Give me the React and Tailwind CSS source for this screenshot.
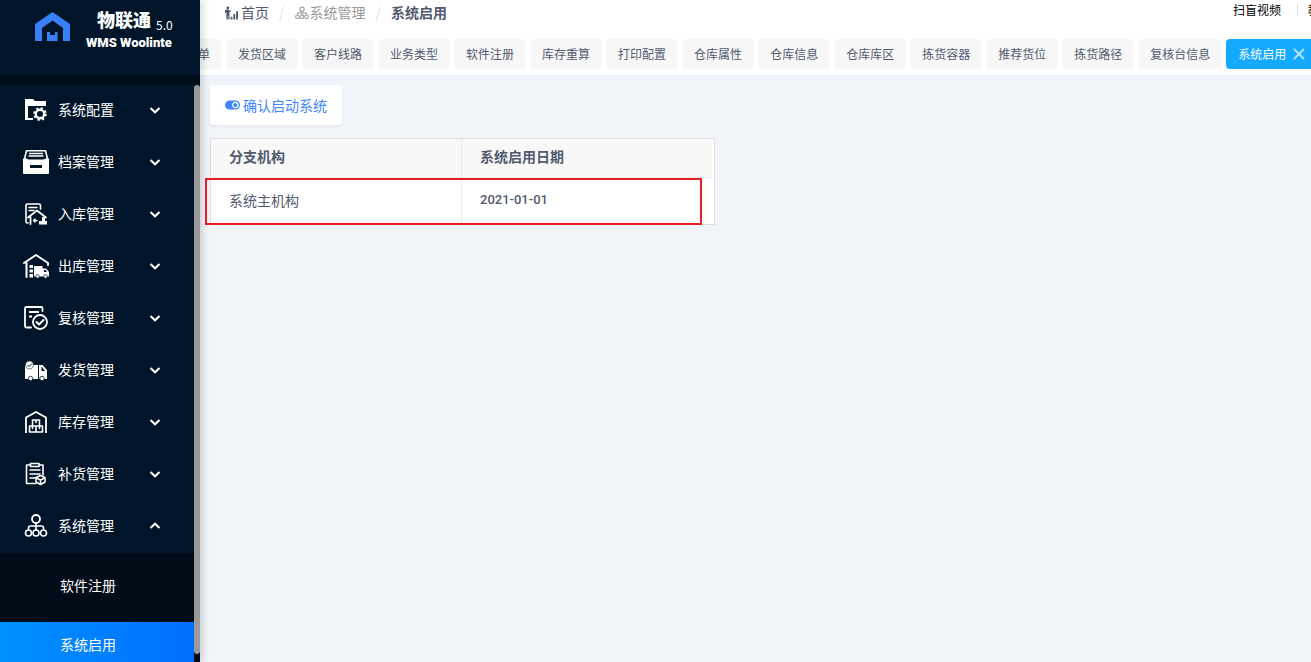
import React from 'react';

const strokeProps = {
  fill: 'none',
  stroke: 'currentColor',
  strokeWidth: 2,
  strokeLinecap: 'round',
  strokeLinejoin: 'round',
};

const Icon = ({ children }) => (
  <svg viewBox="0 0 26 26" className="h-[26px] w-[26px] shrink-0" aria-hidden="true">
    {children}
  </svg>
);

const ConfigIcon = () => (
  <Icon>
    <path fill="currentColor" d="M2 2h8l2 2h11v5H5v12h5v2H2z" />
    <circle cx="17" cy="17" r="4.2" fill="none" stroke="currentColor" strokeWidth="2.4" />
    <circle cx="17" cy="17" r="5.8" fill="none" stroke="currentColor" strokeWidth="2" strokeDasharray="2.3 2.25" />
  </Icon>
);

const ArchiveIcon = () => (
  <Icon>
    <path {...strokeProps} strokeWidth="1.6" d="M1 12L3.5 1.8h19L25 12" />
    <path stroke="currentColor" strokeWidth="1.4" d="M6 4.5h14M5.5 7h15" />
    <path fill="currentColor" fillRule="evenodd" d="M0 9.5h4l1 1h16l1-1h4V24a1 1 0 0 1-1 1H1a1 1 0 0 1-1-1zM7 16v3h12v-3z" />
  </Icon>
);

const InboundIcon = () => (
  <Icon>
    <path {...strokeProps} strokeWidth="1.6" d="M5 22H4.5A1.5 1.5 0 0 1 3 20.5v-16A1.5 1.5 0 0 1 4.5 3H16a1.5 1.5 0 0 1 1.5 1.5V8" />
    <path {...strokeProps} strokeWidth="1.4" d="M6 6.5h8M6 9.5h5" />
    <path {...strokeProps} strokeWidth="1.8" d="M5 16.5l9-7 9 7M7.500 16v7" />
    <path {...strokeProps} strokeWidth="1.4" d="M14 19.5h-3.500M12 18l-1.500 1.500L12 21" />
    <path fill="currentColor" d="M19 16h3v4h2v3.500h-8V20h3z" />
  </Icon>
);

const OutboundIcon = () => (
  <Icon>
    <path {...strokeProps} d="M1 10L13 2l12 8v2M3.5 10v14" />
    <path fill="currentColor" d="M6.5 12H10v3H6.500zM6.500 16.500H10v3H6.500zM6.500 21H10v3.500H6.500z" />
    <path fill="currentColor" fillRule="evenodd" d="M11 13h8.500v2.500H23l3 3.500v4.500H11zM21 17v2h3l-1.500-2z" />
    <circle cx="14.5" cy="23.5" r="1.8" fill="currentColor" stroke="#001529" strokeWidth="0.7" />
    <circle cx="22.5" cy="23.5" r="1.8" fill="currentColor" stroke="#001529" strokeWidth="0.7" />
  </Icon>
);

const ReviewIcon = () => (
  <Icon>
    <path {...strokeProps} strokeWidth="1.8" d="M8 22.500H3.500A1.500 1.500 0 0 1 2 21V3.500A1.500 1.500 0 0 1 3.500 2H18a1.500 1.500 0 0 1 1.500 1.500V6" />
    <path {...strokeProps} strokeWidth="1.8" strokeLinecap="butt" d="M6 7h10M6 11.500h3" />
    <circle cx="17" cy="17" r="7" {...strokeProps} strokeWidth="1.8" />
    <path {...strokeProps} d="M13.500 17l2.500 2.500 4.500-4.500" />
  </Icon>
);

const DeliveryIcon = () => (
  <Icon>
    <path fill="currentColor" fillRule="evenodd" d="M2 8h13v14H3a1 1 0 0 1-1-1zM16 8h3.500L24 13v9h-8zM18.500 10v4h3.500l-3-4z" />
    <circle cx="6.5" cy="8" r="4" fill="currentColor" stroke="#001529" strokeWidth="0.5" />
    <path fill="none" stroke="#001529" strokeWidth="1" d="M4.500 8L6 9.500 9 6.500" />
    <circle cx="7.5" cy="21.5" r="2.2" fill="currentColor" stroke="#001529" strokeWidth="0.8" />
    <circle cx="19" cy="21.5" r="2.2" fill="currentColor" stroke="#001529" strokeWidth="0.8" />
  </Icon>
);

const StockIcon = () => (
  <Icon>
    <path {...strokeProps} strokeLinecap="butt" strokeWidth="1.8" d="M3 24V8.500L13 3l10 5.500V24" />
    <path {...strokeProps} strokeWidth="1.6" d="M9.500 11h7v6h-7zM6.500 17h6.500v6H6.500zM13 17h6.500v6H13zM13 11v2.500M9.500 17v2.500M16.500 17v2.500" />
  </Icon>
);

const ReplenishIcon = () => (
  <Icon>
    <path {...strokeProps} strokeWidth="1.6" d="M7 4H3.500v18.500H13M16.500 4H20v10M7.500 2.500h8.500v3H7.500z" />
    <path {...strokeProps} strokeWidth="1.5" d="M7 9h10M7 13h10M7 17h5" />
    <path {...strokeProps} strokeWidth="1.5" d="M17.500 14.500l4.500 2v4.500l-4.500 2.500L13 21v-4.500zM13.500 17l4 2 4-2M17.500 19v4" />
  </Icon>
);

const OrgIcon = () => (
  <Icon>
    <circle cx="13" cy="6" r="4" {...strokeProps} strokeWidth="1.8" />
    <path {...strokeProps} strokeWidth="1.6" d="M13 10v7M5.500 16v-1a2 2 0 0 1 2-2h11a2 2 0 0 1 2 2v1" />
    <circle cx="5.5" cy="20" r="3" {...strokeProps} strokeWidth="1.6" />
    <circle cx="13" cy="20" r="3" {...strokeProps} strokeWidth="1.6" />
    <circle cx="20.5" cy="20" r="3" {...strokeProps} strokeWidth="1.6" />
  </Icon>
);

const Chevron = ({ open }) => (
  <svg viewBox="0 0 12 12" className={`h-3 w-3 ${open ? 'rotate-180' : ''}`} aria-hidden="true">
    <path fill="none" stroke="currentColor" strokeWidth="2" d="M1.500 4L6 8.300 10.500 4" />
  </svg>
);

const menus = [
  { label: '系统配置', icon: ConfigIcon },
  { label: '档案管理', icon: ArchiveIcon },
  { label: '入库管理', icon: InboundIcon },
  { label: '出库管理', icon: OutboundIcon },
  { label: '复核管理', icon: ReviewIcon },
  { label: '发货管理', icon: DeliveryIcon },
  { label: '库存管理', icon: StockIcon },
  { label: '补货管理', icon: ReplenishIcon },
  { label: '系统管理', icon: OrgIcon, open: true },
];

const tabs = [
  '发货区域', '客户线路', '业务类型', '软件注册', '库存重算', '打印配置', '仓库属性',
  '仓库信息', '仓库库区', '拣货容器', '推荐货位', '拣货路径', '复核台信息',
];

const Sidebar = () => (
  <aside className="relative z-10 flex w-[200px] shrink-0 flex-col bg-[#000c17] text-white shadow-[2px_0_8px_rgba(29,35,41,0.2)]">
    <div className="flex h-[75px] shrink-0 gap-4 bg-[#001529] pt-2 pl-[35px]">
      <svg viewBox="0 0 35 30" className="mt-1 h-[30px] w-[35px]" aria-hidden="true">
        <path fill="#3a7ffa" d="M0 29V12L17.500 0 35 12v17h-7V16l-10.500-7.500L7 16v13z" />
        <path fill="#3a7ffa" d="M12 20h3v3h5v-3h2.500v9H12z" />
      </svg>
      <div>
        <div className="flex h-[22px] items-center gap-[5px] pl-[11px] whitespace-nowrap">
          <span className="text-lg leading-6 font-black">物联通</span>
          <span className="pt-3 text-xs leading-4">5.0</span>
        </div>
        <div className="pt-px font-[Roboto] text-[13px] leading-6 font-black whitespace-nowrap">WMS Woolinte</div>
      </div>
    </div>

    <div className="flex min-h-0 flex-1 pt-[10px]">
      <nav className="min-w-0 flex-1 overflow-hidden">
        {menus.map(({ label, icon: MenuIcon, open }) => (
          <button
            key={label}
            type="button"
            aria-expanded={!!open}
            className="flex h-[52px] w-full items-center bg-[#001529] pr-[33px] pb-[2px] pl-[23px] text-sm"
          >
            <MenuIcon />
            <span className="ml-[9px] flex-1 pb-[2px] text-left">{label}</span>
            <Chevron open={open} />
          </button>
        ))}
        <div className="flex flex-col gap-[13px] pt-[10px]">
          <a href="#register" className="flex h-[46px] items-center pb-[2px] pl-[60px] text-sm">软件注册</a>
          <a href="#enable" className="flex h-[46px] items-center bg-linear-to-r from-[#0091ff] to-[#006eff] pb-[2px] pl-[60px] text-sm">
            系统启用
          </a>
        </div>
      </nav>
      <div className="mb-2 w-[6px] rounded-full bg-[#999]" />
    </div>
  </aside>
);

const Header = () => (
  <header className="shrink-0 bg-white">
    <div className="flex h-[39px] justify-between overflow-hidden">
      <nav className="flex h-6 items-center pl-[25px] text-sm text-[#515a6e]" aria-label="breadcrumb">
        <a href="#home" className="flex items-center gap-[3px]">
          <svg viewBox="0 0 14 14" className="mt-[2px] h-[14px] w-[13px]" fill="currentColor" aria-hidden="true">
            <circle cx="3" cy="1.5" r="1.5" />
            <path d="M0 4l2-.8h2L6.500 5v1L4.800 5.500V14H3.500v-4H3v4H1.500V6L1 7H0zM6 11h2v3H6zM9 8h2v6H9zM12 5h2v9h-2z" />
          </svg>
          首页
        </a>
        <span className="mx-[10px] text-[#dcdee2]">/</span>
        <a href="#system" className="flex items-center gap-px text-[#999]">
          <svg viewBox="0 0 26 26" className="mt-[2px] h-[14px] w-[14px]" fill="none" stroke="currentColor" strokeWidth="2" aria-hidden="true">
            <circle cx="13" cy="6" r="4" />
            <path d="M13 10v7M5 16v-3h16v3" />
            <circle cx="4.5" cy="20" r="3.3" />
            <circle cx="13" cy="20" r="3.3" />
            <circle cx="21.5" cy="20" r="3.3" />
          </svg>
          系统管理
        </a>
        <span className="mx-[10px] text-[#dcdee2]">/</span>
        <span className="font-bold">系统启用</span>
      </nav>
      <div className="-mr-[9px] flex h-5 items-center text-xs text-black">
        <a href="#video">扫盲视频</a>
        <span className="mr-[10px] ml-4 h-3 w-px bg-[#dcdee2]" />
        <a href="#course">教</a>
      </div>
    </div>
    <div className="overflow-hidden pb-[6px]">
      <div className="-ml-[2px] flex gap-1 text-xs whitespace-nowrap text-[#515a6e]">
        <button type="button" className="h-[30px] shrink-0 rounded bg-[#f7f7f7] pr-3">单</button>
        {tabs.map((tab) => (
          <button key={tab} type="button" className="h-[30px] shrink-0 rounded bg-[#f7f7f7] px-3">{tab}</button>
        ))}
        <button type="button" className="flex h-[30px] shrink-0 items-center gap-[7px] rounded bg-[#15a9ff] px-3 text-white">
          系统启用
          <svg viewBox="0 0 12 12" className="h-3 w-3" aria-hidden="true">
            <path stroke="#b8e4ff" strokeWidth="1.8" d="M1 1l10 10M11 1L1 11" />
          </svg>
        </button>
      </div>
    </div>
  </header>
);

const BranchTable = () => (
  <div className="relative mt-[13px] w-[505px] border border-[#dcdee2] bg-white text-sm text-[#515a6e]">
    <table className="w-[501px] table-fixed border-separate border-spacing-0 text-left">
      <thead>
        <tr className="bg-[#f8f8f9]">
          <th className="h-[39px] w-[251px] border-r border-b border-[#e8eaec] px-[18px] pb-1 font-bold">分支机构</th>
          <th className="h-[39px] border-b border-[#e8eaec] px-[18px] pb-1 font-bold">系统启用日期</th>
        </tr>
      </thead>
      <tbody>
        <tr>
          <td className="h-[46px] border-r border-[#e8eaec] px-[18px] pb-[2px]">系统主机构</td>
          <td className="h-[46px] px-[18px] pb-[2px] font-[Roboto] text-[13px] font-medium">2021-01-01</td>
        </tr>
      </tbody>
    </table>
    <div className="pointer-events-none absolute -bottom-px -left-[6px] h-[47px] w-[497px] border-2 border-[#ed1c24]" />
  </div>
);

export default function App() {
  return (
    <div className="flex h-screen overflow-hidden bg-[#f1f5fa] font-['Noto_Sans_CJK_SC',sans-serif]">
      <Sidebar />
      <div className="flex min-w-0 flex-1 flex-col">
        <Header />
        <main className="flex-1 p-[10px]">
          <button
            type="button"
            className="flex h-10 items-center gap-[3px] rounded bg-white px-[15px] pb-px text-sm text-[#3f86ff] shadow-[0_1px_3px_rgba(0,0,0,0.08)]"
          >
            <svg viewBox="0 0 15 10" className="h-[10px] w-[15px]" aria-hidden="true">
              <rect width="15" height="9" y="0.5" rx="4.5" fill="currentColor" />
              <circle cx="10.3" cy="5" r="2.7" fill="currentColor" stroke="#fff" strokeWidth="1.2" />
            </svg>
            确认启动系统
          </button>
          <BranchTable />
        </main>
      </div>
    </div>
  );
}
